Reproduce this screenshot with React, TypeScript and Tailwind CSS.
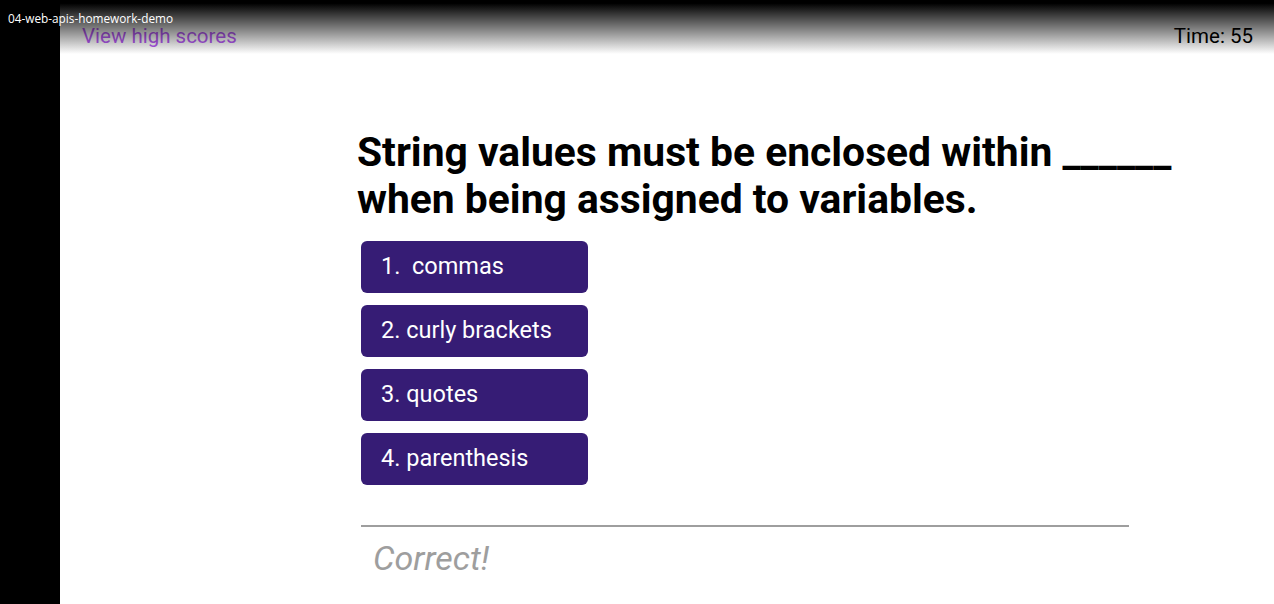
const choices = ['1.\u00a0 commas', '2. curly brackets', '3. quotes', '4. parenthesis'];

const App = () => {
  return (
    <div className="relative flex h-[604px] w-[1274px] overflow-hidden bg-white font-['Roboto',sans-serif]">
      {/* black side of the video frame */}
      <div className="w-[60px] shrink-0 bg-black" />

      <div className="flex flex-1 flex-col">
        <header className="flex items-start justify-between pl-[22px] pr-[21px] pt-[24px] text-[20.5px] leading-[24px]">
          <a className="text-[#b65af5]">View high scores</a>
          <span className="text-black">Time: 55</span>
        </header>

        <main className="pl-[297px] pt-[81px]">
          <h1 className="w-[860px] text-[40.8px] font-bold leading-[47px] text-black">
            String values must be enclosed within ______ when being assigned to variables.
          </h1>

          <div className="mt-[18px] flex flex-col gap-[12px] pl-[4px]">
            {choices.map((c) => (
              <button
                key={c}
                className="h-[52px] w-[227px] rounded-[6px] bg-[#361c75] pl-[20px] text-left text-[23.5px] leading-none whitespace-pre text-white"
              >
                {c}
              </button>
            ))}
          </div>

          <div className="ml-[4px] mt-[40px] w-[768px] border-t-2 border-[#9e9e9e] pl-[12px] pt-[10px]">
            <p className="text-[34px] italic leading-[42px] text-[#9e9e9e]">Correct!</p>
          </div>
        </main>
      </div>

      {/* player overlay */}
      <div className="pointer-events-none absolute inset-x-0 top-0 h-[54px] bg-linear-to-b from-black from-[6%] to-transparent" />
      <div className="pointer-events-none absolute left-[8px] top-[10px] font-['Open_Sans',sans-serif] text-[11.8px] leading-[16px] text-white">
        04-web-apis-homework-demo
      </div>
    </div>
  );
};

export default App;
